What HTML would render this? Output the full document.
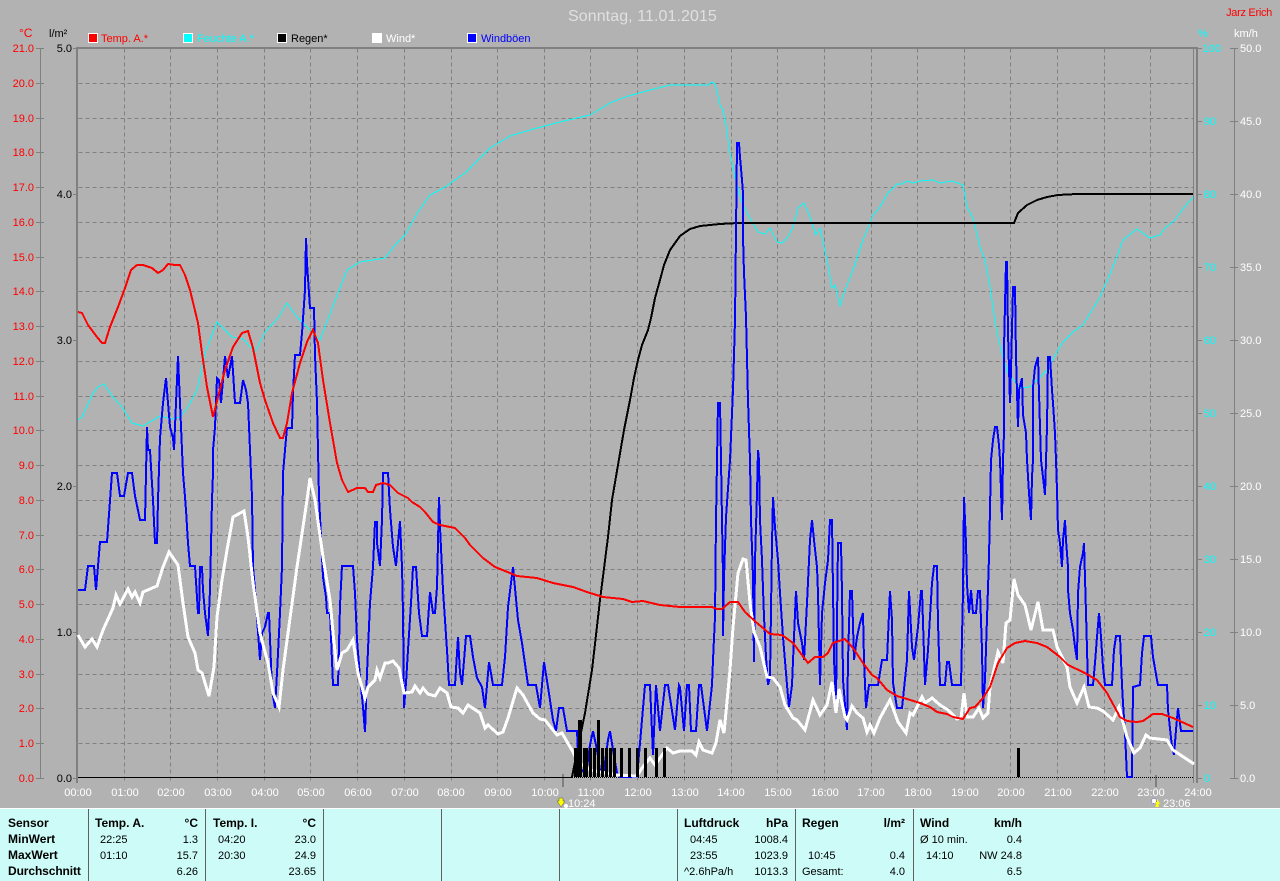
<!DOCTYPE html>
<html lang="de"><head><meta charset="utf-8"><title>Sonntag, 11.01.2015</title>
<style>
html,body{margin:0;padding:0;background:#b2b2b2;width:1280px;height:881px;overflow:hidden}
svg{display:block;position:absolute;left:0;top:0}
text{font-family:"Liberation Sans",sans-serif;font-size:11px}
.l{fill:none;shape-rendering:crispEdges;stroke-linejoin:miter}
.r{text-anchor:end}.m{text-anchor:middle}
.red{fill:#f00}.cy{fill:#0ff}.wh{fill:#fff}.bk{fill:#000}
.xl text{fill:#fff;text-anchor:middle}
.b{font-weight:bold;font-size:12px;fill:#000}
.t{fill:#000}
</style></head><body>
<svg width="1280" height="881" viewBox="0 0 1280 881" xmlns="http://www.w3.org/2000/svg">
<rect width="1280" height="881" fill="#b2b2b2"/>

<!-- title -->
<text x="568" y="21" style="font-size:16px;letter-spacing:.08px" fill="#e0e0e0">Sonntag, 11.01.2015</text>
<text x="1272" y="16" class="r red" style="letter-spacing:-.3px">Jarz Erich</text>

<!-- grid -->
<g transform="translate(.5 .5)">
<path class="l" stroke="#808080" stroke-dasharray="4 3" d="M78 83H1193M78 118H1193M78 152H1193M78 187H1193M78 222H1193M78 257H1193M78 291H1193M78 326H1193M78 361H1193M78 396H1193M78 430H1193M78 465H1193M78 500H1193M78 535H1193M78 569H1193M78 604H1193M78 639H1193M78 674H1193M78 708H1193M78 743H1193"/>
<path class="l" stroke="#808080" stroke-dasharray="4 3" d="M124 48V783M170 48V783M217 48V783M264 48V783M310 48V783M357 48V783M404 48V783M451 48V783M497 48V783M544 48V783M590 48V783M637 48V783M684 48V783M731 48V783M777 48V783M824 48V783M871 48V783M917 48V783M964 48V783M1010 48V783M1057 48V783M1104 48V783M1150 48V783"/>
</g>

<!-- frame -->
<g fill="#808080" shape-rendering="crispEdges">
<rect x="76" y="47" width="1122" height="2"/>
<rect x="76" y="47" width="2" height="736"/>
<rect x="1193" y="48" width="1" height="735"/>
<rect x="1196" y="47" width="2" height="736"/>
<rect x="40" y="48" width="1" height="730"/>
<rect x="1234" y="48" width="1" height="730"/>
<rect x="562" y="774" width="2" height="13"/>
<rect x="1155" y="775" width="2" height="12"/>
</g>
<!-- ticks -->
<g transform="translate(0 .5)">
<path class="l" stroke="#808080" d="M36 48H44M36 83H44M36 118H44M36 152H44M36 187H44M36 222H44M36 257H44M36 291H44M36 326H44M36 361H44M36 396H44M36 430H44M36 465H44M36 500H44M36 535H44M36 569H44M36 604H44M36 639H44M36 674H44M36 708H44M36 743H44M36 778H44"/>
<path class="l" stroke="#808080" d="M73 48H76M73 194H76M73 340H76M73 486H76M73 632H76M73 778H76"/>
<path class="l" stroke="#808080" d="M1198 48H1202M1198 121H1202M1198 194H1202M1198 267H1202M1198 340H1202M1198 413H1202M1198 486H1202M1198 559H1202M1198 632H1202M1198 705H1202M1198 778H1202"/>
<path class="l" stroke="#808080" d="M1230 48H1238M1230 121H1238M1230 194H1238M1230 267H1238M1230 340H1238M1230 413H1238M1230 486H1238M1230 559H1238M1230 632H1238M1230 705H1238M1230 778H1238"/>
</g>

<!-- axis units -->
<text x="19" y="37" class="red" style="font-size:12px">°C</text>
<text x="49" y="37" class="bk">l/m²</text>
<text x="1198" y="37" class="cy">%</text>
<text x="1234" y="37" class="wh">km/h</text>

<!-- temp axis -->
<g class="red" text-anchor="end">
<text x="34" y="52">21.0</text><text x="34" y="87">20.0</text><text x="34" y="122">19.0</text><text x="34" y="156">18.0</text><text x="34" y="191">17.0</text><text x="34" y="226">16.0</text><text x="34" y="261">15.0</text><text x="34" y="295">14.0</text><text x="34" y="330">13.0</text><text x="34" y="365">12.0</text><text x="34" y="400">11.0</text><text x="34" y="434">10.0</text><text x="34" y="469">9.0</text><text x="34" y="504">8.0</text><text x="34" y="539">7.0</text><text x="34" y="573">6.0</text><text x="34" y="608">5.0</text><text x="34" y="643">4.0</text><text x="34" y="678">3.0</text><text x="34" y="712">2.0</text><text x="34" y="747">1.0</text><text x="34" y="782">0.0</text>
</g>
<g class="bk" text-anchor="end">
<text x="72" y="52">5.0</text><text x="72" y="198">4.0</text><text x="72" y="344">3.0</text><text x="72" y="490">2.0</text><text x="72" y="636">1.0</text><text x="72" y="782">0.0</text>
</g>
<g class="cy" text-anchor="end">
<text x="1221" y="52">100</text><text x="1216" y="125">90</text><text x="1216" y="198">80</text><text x="1216" y="271">70</text><text x="1216" y="344">60</text><text x="1216" y="417">50</text><text x="1216" y="490">40</text><text x="1216" y="563">30</text><text x="1216" y="636">20</text><text x="1216" y="709">10</text><text x="1210" y="782">0</text>
</g>
<g class="wh">
<text x="1240" y="52">50.0</text><text x="1240" y="125">45.0</text><text x="1240" y="198">40.0</text><text x="1240" y="271">35.0</text><text x="1240" y="344">30.0</text><text x="1240" y="417">25.0</text><text x="1240" y="490">20.0</text><text x="1240" y="563">15.0</text><text x="1240" y="636">10.0</text><text x="1240" y="709">5.0</text><text x="1240" y="782">0.0</text>
</g>

<!-- legend -->
<g shape-rendering="crispEdges" stroke="#fff">
<rect x="88.5" y="33.5" width="9" height="9" fill="#f00"/>
<rect x="183.5" y="33.5" width="9" height="9" fill="#0ff"/>
<rect x="277.5" y="33.5" width="9" height="9" fill="#000"/>
<rect x="372.5" y="33.5" width="9" height="9" fill="#fff"/>
<rect x="467.5" y="33.5" width="9" height="9" fill="#00f"/>
</g>
<text x="101" y="42" class="red">Temp. A.*</text>
<text x="197" y="42" class="cy">Feuchte A.*</text>
<text x="291" y="42" class="bk">Regen*</text>
<text x="386" y="42" class="wh">Wind*</text>
<text x="481" y="42" fill="#0000ff">Windböen</text>

<!-- x labels -->
<g class="xl">
<text x="78" y="796">00:00</text><text x="125" y="796">01:00</text><text x="171" y="796">02:00</text><text x="218" y="796">03:00</text><text x="265" y="796">04:00</text><text x="311" y="796">05:00</text><text x="358" y="796">06:00</text><text x="405" y="796">07:00</text><text x="451" y="796">08:00</text><text x="498" y="796">09:00</text><text x="545" y="796">10:00</text><text x="591" y="796">11:00</text><text x="638" y="796">12:00</text><text x="685" y="796">13:00</text><text x="731" y="796">14:00</text><text x="778" y="796">15:00</text><text x="825" y="796">16:00</text><text x="871" y="796">17:00</text><text x="918" y="796">18:00</text><text x="965" y="796">19:00</text><text x="1011" y="796">20:00</text><text x="1058" y="796">21:00</text><text x="1105" y="796">22:00</text><text x="1151" y="796">23:00</text><text x="1198" y="796">24:00</text>
</g>

<!-- baseline -->
<path class="l" stroke="#000" d="M78 777.5H572"/>
<path class="l" stroke="#000" stroke-dasharray="1 1" d="M572 777.5H1194"/>

<!-- humidity -->
<polyline class="l" stroke="#00ffff" stroke-width="1" points="78,420 82,417 93,393 98,387 104,384 113,397 122,407 132,423 143,426 160,416 172,419 180,417 188,407 197,390 200,377 205,353 217,322 232,337 243,339 255,352 265,332 278,318 287,303 297,317 315,335 320,340 338,293 347,270 360,262 385,258 395,245 405,235 418,212 430,195 445,187 465,173 490,148 510,136 530,130 560,122 590,115 610,103 625,97 650,90 670,85 708,85 712,82 715,84 720,105 723,110 726,125 730,153 735,177 742,203 747,213 758,232 765,234 770,228 777,242 782,243 787,238 793,228 798,208 804,203 810,217 816,235 820,228 827,260 832,288 835,285 840,306 845,290 853,270 863,240 873,215 880,207 888,193 897,184 902,184 907,181 913,183 920,181 933,180 940,183 952,181 963,185 967,207 973,218 980,247 985,260 990,287 997,333 1003,357 1008,373 1020,388 1030,387 1047,370 1062,343 1073,332 1083,325 1100,297 1113,267 1123,240 1137,229 1150,238 1160,235 1165,228 1175,220 1182,210 1193,197"/>

<!-- rain total -->
<polyline class="l" stroke="#000" stroke-width="2" points="572,777 578,747 585,713 592,670 600,600 608,537 612,500 618,465 624,430 630,400 634,378 638,360 642,345 648,330 651,318 655,298 660,280 664,265 670,250 680,236 690,229 700,226 720,224 738,223 1014,223 1018,213 1027,205 1037,200 1047,197 1058,195 1077,194 1193,194"/>

<!-- gusts -->
<polyline class="l" stroke="#0000ff" stroke-width="2" points="78,590 85,590 88,566 94,566 96,590 100,542 107,542 112,473 117,473 120,496 124,496 128,473 132,473 135,496 140,520 143,520 145,520 147,427 148,450 150,450 153,500 155,543 157,543 158,500 160,438 163,403 166,378 168,403 170,427 173,438 174,450 176,403 177,380 178,356 179,380 180,403 182,450 183,473 185,497 186,510 188,543 190,566 195,566 198,613 199,613 200,567 202,567 203,590 205,613 208,636 210,590 212,500 213,473 213,450 215,427 217,378 219,380 221,403 223,380 225,356 228,378 232,356 235,403 240,403 243,380 246,390 248,403 250,450 252,497 253,567 255,590 260,660 262,633 265,627 268,613 269,613 272,690 275,708 277,673 280,613 282,567 283,473 285,450 287,428 292,428 293,393 295,355 300,355 302,333 305,290 306,238 307,263 310,308 314,308 315,355 317,403 318,450 319,497 323,577 326,597 327,613 330,613 333,685 338,685 340,605 342,566 353,566 355,593 357,640 360,677 363,707 365,732 367,673 370,603 373,567 375,522 377,522 377,543 380,566 382,520 383,473 388,473 390,510 393,547 396,566 398,543 400,521 402,567 403,613 404,708 406,683 408,650 411,603 413,567 416,567 419,613 422,636 427,636 430,592 433,613 435,613 437,587 439,497 440,527 443,590 447,650 449,685 455,685 458,637 460,673 462,685 466,636 470,636 473,657 477,678 482,687 485,708 489,662 493,685 502,685 505,657 508,607 513,567 518,620 522,643 528,685 536,685 540,708 544,662 548,687 553,720 556,731 559,708 563,708 567,731 577,731 578,753 580,768 586,775 590,745 593,731 597,750 600,770 604,770 608,740 610,731 613,750 617,773 620,777 637,777 640,743 645,685 650,685 653,755 656,685 660,731 665,685 668,685 675,730 679,685 680,687 684,731 687,685 689,685 691,731 696,731 699,685 701,685 707,731 712,685 713,660 715,617 716,520 718,403 720,403 721,460 722,520 723,577 723,636 724,577 726,517 730,460 733,390 735,320 737,143 739,143 740,157 742,180 743,193 743,237 744,273 746,317 748,400 750,460 751,520 753,577 754,662 755,560 757,493 758,450 759,460 760,520 762,560 764,617 766,657 768,685 770,677 772,543 773,497 775,527 778,560 780,593 783,637 787,685 789,707 792,685 794,637 796,591 798,623 802,643 804,660 807,603 810,540 812,520 814,540 817,567 818,593 820,685 822,613 825,583 828,560 830,520 832,520 834,660 836,700 838,543 841,543 842,593 843,680 847,730 848,660 850,591 852,591 854,660 857,637 860,623 863,613 864,660 866,708 869,685 878,685 882,660 887,660 890,591 892,620 893,683 897,708 902,708 907,660 909,591 912,647 914,660 918,627 921,591 922,591 925,685 928,650 932,583 934,566 937,566 938,623 940,685 945,685 947,662 949,662 952,685 961,685 962,637 963,592 964,497 966,543 967,585 969,613 971,590 973,613 976,613 978,591 980,591 982,650 983,708 985,680 989,557 991,460 993,440 995,427 997,427 999,445 1000,460 1002,520 1003,460 1004,433 1004,348 1006,262 1007,262 1008,333 1010,403 1011,370 1013,287 1015,287 1016,357 1018,427 1019,390 1022,378 1023,415 1026,433 1027,460 1029,493 1031,520 1032,477 1033,460 1033,387 1035,367 1038,357 1039,393 1041,460 1043,477 1045,495 1047,427 1048,357 1050,357 1052,390 1053,403 1055,433 1056,460 1057,490 1058,530 1060,543 1062,567 1063,540 1065,520 1066,540 1068,567 1068,590 1070,613 1073,630 1075,647 1077,660 1078,593 1080,567 1083,553 1084,543 1086,613 1088,685 1093,685 1095,663 1097,637 1099,613 1101,637 1103,667 1105,685 1112,685 1114,650 1116,636 1120,636 1122,685 1123,703 1125,733 1127,777 1132,777 1133,687 1140,685 1142,653 1144,636 1151,636 1153,657 1157,680 1158,685 1167,685 1168,710 1172,747 1174,755 1176,730 1178,708 1181,731 1193,731"/>

<!-- wind -->
<polyline class="l" stroke="#fff" stroke-width="3" points="78,635 85,647 92,639 97,647 103,630 113,608 116,595 120,604 128,589 132,597 135,592 140,603 143,592 157,586 163,567 169,552 178,565 183,603 188,637 195,653 198,670 202,673 209,696 214,667 217,617 222,580 227,550 233,517 244,511 248,537 253,583 260,633 268,663 273,693 279,707 283,670 288,633 297,567 307,500 310,478 315,500 323,557 330,600 333,633 337,670 342,653 347,650 353,640 358,673 365,698 368,687 375,680 377,670 380,678 385,663 388,663 393,661 399,668 404,693 412,692 415,686 420,693 423,688 428,694 435,696 440,688 447,693 451,707 458,708 463,713 468,705 480,713 485,728 488,725 498,734 503,732 508,718 517,688 523,695 533,713 540,719 545,720 557,735 562,733 573,752 578,762 590,770 600,772 617,775 637,776 642,768 650,758 655,765 667,748 673,753 680,751 692,751 696,755 699,742 703,750 712,753 716,743 720,720 724,733 730,670 733,627 738,573 743,559 746,560 750,603 754,632 760,647 767,677 773,678 780,687 785,705 793,718 797,720 805,730 813,700 820,715 827,705 832,682 836,713 839,689 845,717 847,720 852,706 857,713 863,718 867,732 870,725 874,733 880,718 890,700 898,722 906,733 910,713 913,715 922,697 925,703 932,698 940,705 948,710 957,719 961,718 964,693 967,717 973,717 979,708 983,718 988,713 990,687 998,652 1003,663 1006,623 1010,620 1014,579 1018,595 1025,605 1031,630 1038,602 1043,630 1053,630 1057,647 1067,667 1070,687 1077,703 1084,687 1089,707 1097,708 1103,711 1113,720 1119,707 1127,737 1134,753 1140,748 1146,735 1150,738 1167,740 1173,750 1185,758 1194,764"/>

<!-- temp -->
<polyline class="l" stroke="#f00" stroke-width="2" points="78,312 82,313 88,325 97,337 102,343 105,343 110,327 118,307 125,288 131,270 137,265 143,265 152,268 158,273 163,270 168,264 175,265 180,265 185,275 190,290 198,323 202,353 207,387 213,417 218,397 225,370 233,347 242,333 248,331 253,348 260,383 265,400 273,423 280,438 283,438 287,423 292,393 300,363 307,342 313,330 318,343 323,380 330,423 337,463 342,480 348,492 357,488 365,488 368,492 373,492 376,485 383,483 390,485 398,493 408,498 412,502 420,507 425,512 433,522 440,525 455,528 465,538 470,545 483,558 495,567 510,573 517,576 537,578 553,583 573,587 587,592 603,597 623,599 632,602 643,601 660,605 680,607 712,607 717,609 722,609 730,602 738,602 745,612 757,623 763,628 770,634 782,635 793,643 808,663 815,657 823,657 828,653 833,643 845,639 853,648 863,663 872,675 877,678 887,690 897,696 907,699 920,703 930,707 937,712 947,714 953,717 963,719 970,708 975,707 983,698 990,687 998,663 1007,648 1015,643 1025,641 1037,643 1047,647 1060,657 1068,665 1083,672 1097,680 1107,693 1120,717 1127,721 1137,722 1143,721 1153,714 1162,714 1173,718 1193,727"/>

<!-- rain bars -->
<g fill="#000" shape-rendering="crispEdges">
<rect x="574" y="748" width="4" height="29"/><rect x="578" y="720" width="4" height="57"/><rect x="583" y="748" width="5" height="29"/><rect x="589" y="748" width="3" height="29"/><rect x="593" y="748" width="3" height="29"/><rect x="597" y="720" width="3" height="57"/><rect x="601" y="748" width="3" height="29"/><rect x="605" y="748" width="3" height="29"/><rect x="609" y="748" width="3" height="29"/><rect x="613" y="748" width="3" height="29"/><rect x="620" y="748" width="3" height="29"/><rect x="628" y="748" width="3" height="29"/><rect x="636" y="748" width="3" height="29"/><rect x="644" y="748" width="3" height="29"/><rect x="655" y="748" width="3" height="29"/><rect x="663" y="748" width="3" height="29"/><rect x="1017" y="748" width="3" height="29"/>
</g>

<!-- min/max markers -->
<path d="M559 798h4v3h2l-4 6-4-6h2z" fill="#ff0" stroke="#555" stroke-width=".5"/>
<circle cx="566" cy="806" r="2" fill="#fff"/>
<text x="568" y="807" class="wh">10:24</text>
<path d="M1155 807h4l-.5-3h1.500l-2.500-5-2.500 5h1.500z" fill="#ff0"/>
<circle cx="1154" cy="801" r="2.500" fill="#fff" stroke="#00f" stroke-width=".5" stroke-dasharray="1 1"/>
<text x="1163" y="807" class="wh">23:06</text>

<!-- table -->
<rect x="0" y="808" width="1280" height="73" fill="#ccfbf8"/>
<rect x="0" y="808" width="1280" height="1" fill="#fff"/>
<g fill="#606060" shape-rendering="crispEdges">
<rect x="88" y="809" width="1" height="72"/><rect x="205" y="809" width="1" height="72"/><rect x="323" y="809" width="1" height="72"/><rect x="441" y="809" width="1" height="72"/><rect x="559" y="809" width="1" height="72"/><rect x="677" y="809" width="1" height="72"/><rect x="795" y="809" width="1" height="72"/><rect x="913" y="809" width="1" height="72"/>
</g>
<g class="b">
<text class="b" x="8" y="827">Sensor</text><text class="b" x="8" y="843">MinWert</text><text class="b" x="8" y="859">MaxWert</text><text class="b" x="8" y="875" style="letter-spacing:-.1px">Durchschnitt</text>
<text class="b" x="95" y="827">Temp. A.</text><text class="b r" x="198" y="827">°C</text>
<text class="b" x="213" y="827">Temp. I.</text><text class="b r" x="316" y="827">°C</text>
<text class="b" x="684" y="827">Luftdruck</text><text class="b r" x="788" y="827">hPa</text>
<text class="b" x="802" y="827">Regen</text><text class="b r" x="905" y="827">l/m²</text>
<text class="b" x="920" y="827">Wind</text><text class="b r" x="1022" y="827">km/h</text>
</g>
<g class="t">
<text x="100" y="843">22:25</text><text x="198" y="843" class="r">1.3</text>
<text x="100" y="859">01:10</text><text x="198" y="859" class="r">15.7</text>
<text x="198" y="875" class="r">6.26</text>
<text x="218" y="843">04:20</text><text x="316" y="843" class="r">23.0</text>
<text x="218" y="859">20:30</text><text x="316" y="859" class="r">24.9</text>
<text x="316" y="875" class="r">23.65</text>
<text x="690" y="843">04:45</text><text x="788" y="843" class="r">1008.4</text>
<text x="690" y="859">23:55</text><text x="788" y="859" class="r">1023.9</text>
<text x="684" y="875">^2.6hPa/h</text><text x="788" y="875" class="r">1013.3</text>
<text x="808" y="859">10:45</text><text x="905" y="859" class="r">0.4</text>
<text x="802" y="875">Gesamt:</text><text x="905" y="875" class="r">4.0</text>
<text x="920" y="843">Ø 10 min.</text><text x="1022" y="843" class="r">0.4</text>
<text x="926" y="859">14:10</text><text x="1022" y="859" class="r">NW 24.8</text>
<text x="1022" y="875" class="r">6.5</text>
</g>
</svg>
</body></html>
